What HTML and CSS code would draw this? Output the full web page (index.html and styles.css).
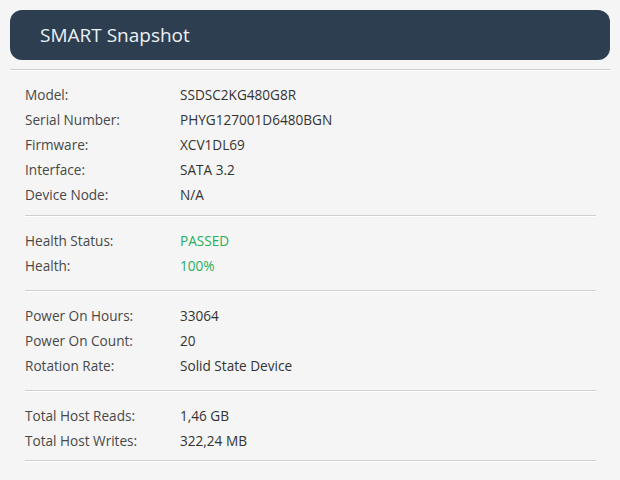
FILE: index.html
```html
<!DOCTYPE html>
<html>
<head>
    <link rel="stylesheet" href="styles.css">
</head>
<body>
    <div class="header">
        <h1>SMART Snapshot</h1>
    </div>
    <hr class="top-rule">

    <div class="info">
        <!-- Identity -->
        <div class="section first">
            <div class="row"><span class="label">Model:</span><span class="value">SSDSC2KG480G8R</span></div>
            <div class="row"><span class="label">Serial Number:</span><span class="value">PHYG127001D6480BGN</span></div>
            <div class="row"><span class="label">Firmware:</span><span class="value">XCV1DL69</span></div>
            <div class="row"><span class="label">Interface:</span><span class="value">SATA 3.2</span></div>
            <div class="row"><span class="label">Device Node:</span><span class="value">N/A</span></div>
        </div>

        <!-- Health -->
        <div class="section">
            <div class="row"><span class="label">Health Status:</span><span class="value good">PASSED</span></div>
            <div class="row"><span class="label">Health:</span><span class="value good">100%</span></div>
        </div>

        <!-- Power -->
        <div class="section">
            <div class="row"><span class="label">Power On Hours:</span><span class="value">33064</span></div>
            <div class="row"><span class="label">Power On Count:</span><span class="value">20</span></div>
            <div class="row"><span class="label">Rotation Rate:</span><span class="value">Solid State Device</span></div>
        </div>

        <!-- Usage -->
        <div class="section last">
            <div class="row"><span class="label">Total Host Reads:</span><span class="value">1,46 GB</span></div>
            <div class="row"><span class="label">Total Host Writes:</span><span class="value">322,24 MB</span></div>
        </div>
    </div>
</body>
</html>
```

FILE: styles.css
```css
body {
    margin: 0;
    padding: 10px;
    background-color: #f5f5f5;
    font-family: "Open Sans", "Noto Sans", sans-serif;
    color: #333;
}

.header {
    height: 50px;
    display: flex;
    align-items: center;
    padding: 0 30px;
    border-radius: 12px;
    background-color: #2c3e50;
}

.header h1 {
    margin: 0;
    font-size: 19px;
    font-weight: 400;
    color: #eef1f4;
}

.top-rule {
    margin: 9px 0 0;
    border: none;
    border-top: 1px solid #cfcfcf;
    border-bottom: 1px solid #fff;
}

.info {
    padding: 0 14px 0 15px;
}

.section {
    padding: 12px 0;
    border-bottom: 1px solid #cfcfcf;
    box-shadow: 0 1px 0 #fff;
}

.section.first {
    padding-top: 11px;
    padding-bottom: 8px;
}

.section.last {
    padding-bottom: 7px;
}

.row {
    display: flex;
    height: 25px;
    align-items: center;
    font-size: 13.6px;
}

.label {
    width: 155px;
    color: #484848;
}

.value {
    color: #333;
}

.good {
    color: #27ae60;
}
```
